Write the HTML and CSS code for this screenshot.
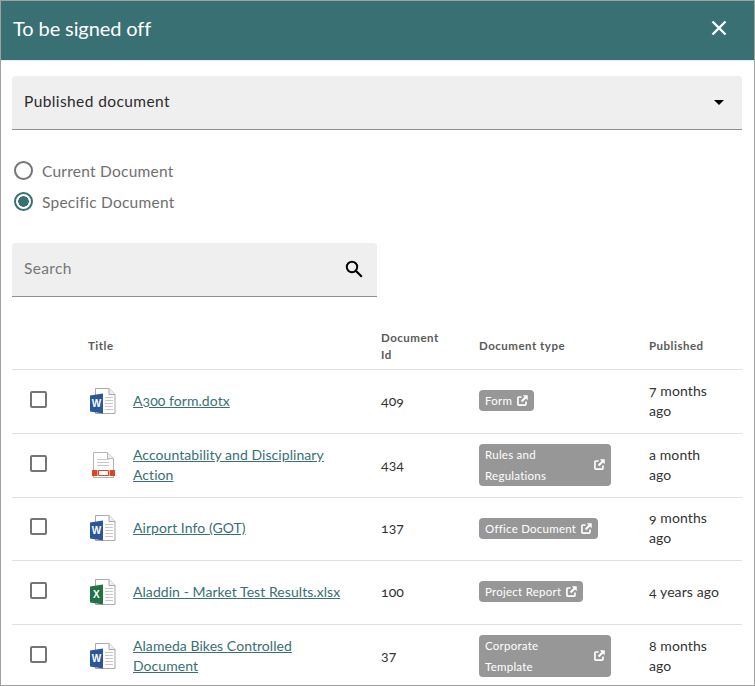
FILE: index.html
```html
<!DOCTYPE html>
<html lang="en">
<head>
  <meta charset="UTF-8">
  <title>To be signed off</title>
  <link rel="stylesheet" href="styles.css">
</head>
<body>
  <svg class="defs" width="0" height="0">
    <symbol id="ext" viewBox="0 0 12 12">
      <path d="M5 2.200H2a1 1 0 0 0-1 1V10a1 1 0 0 0 1 1h6.800a1 1 0 0 0 1-1V7" fill="none" stroke="currentColor" stroke-width="1.800"/>
      <path d="M6.300 .3H11.700V5.700L9.800 3.800 5.800 7.800 4.200 6.200 8.200 2.200z" fill="currentColor"/>
    </symbol>
    <symbol id="page" viewBox="0 0 26 26">
      <path d="M5.500 .5h13.500l6 6v19H5.500z" fill="#fff" stroke="#a8a8a8"/>
      <path d="M19 .5v6h6" fill="#eee" stroke="#a8a8a8"/>
      <path d="M15 9.500h8M15 12.500h8M15 15.500h8M15 18.500h8M15 21.500h8" stroke="#c8c8c8"/>
    </symbol>
  </svg>
  <div class="dialog">
    <header class="head">
      <h1>To be signed off</h1>
      <svg class="close" viewBox="0 0 16 16"><path d="M1.500 1.500l13 13M14.500 1.500l-13 13" stroke="#fff" stroke-width="2.400" fill="none"/></svg>
    </header>
    <div class="body">
      <div class="select">
        <span>Published document</span>
        <i class="caret"></i>
      </div>
      <div class="radios">
        <label class="radio"><i class="dot"></i>Current Document</label>
        <label class="radio on"><i class="dot"></i>Specific Document</label>
      </div>
      <div class="search">
        <span>Search</span>
        <svg width="18" height="18" viewBox="0 0 18 18"><circle cx="7" cy="7" r="5.200" fill="none" stroke="#000" stroke-width="2"/><path d="M10.800 10.800l6 6" stroke="#000" stroke-width="2.200"/></svg>
      </div>
      <table class="docs">
        <colgroup>
          <col class="c-check"><col class="c-icon"><col class="c-title"><col class="c-id"><col class="c-type"><col class="c-pub">
        </colgroup>
        <thead>
          <tr><th></th><th colspan="2">Title</th><th class="th-id">Document Id</th><th>Document type</th><th>Published</th></tr>
        </thead>
        <tbody>
          <tr>
            <td><i class="check"></i></td>
            <td><svg class="file" viewBox="0 0 26 26"><use href="#page"/><path d="M0 7.500L13 5.500v20L0 23.500z" fill="#2b579a"/><text x="6.500" y="19" class="letter">W</text></svg></td>
            <td><a href="#">A300 form.dotx</a></td>
            <td>409</td>
            <td><span class="tag">Form <svg class="ext"><use href="#ext"/></svg></span></td>
            <td>7 months ago</td>
          </tr>
          <tr>
            <td><i class="check"></i></td>
            <td><svg class="file" viewBox="0 0 26 26"><path d="M3.500 .5h14l6 6v19h-20z" fill="#fff" stroke="#b5b5b5"/><path d="M17.500 .5v6h6" fill="#eee" stroke="#b5b5b5"/><path d="M7 7.500h12M7 10.500h12M7 13.500h12" stroke="#c8c8c8"/><path d="M2 18h5.500v6H2zM19.500 18H25v6h-5.500z" fill="#d9472b"/><path d="M8.500 18.500h10v5h-10z" fill="#fff" stroke="#d9472b"/></svg></td>
            <td><a href="#">Accountability and Disciplinary Action</a></td>
            <td>434</td>
            <td><span class="tag wide"><span>Rules and Regulations</span> <svg class="ext"><use href="#ext"/></svg></span></td>
            <td>a month ago</td>
          </tr>
          <tr>
            <td><i class="check"></i></td>
            <td><svg class="file" viewBox="0 0 26 26"><use href="#page"/><path d="M0 7.500L13 5.500v20L0 23.500z" fill="#2b579a"/><text x="6.500" y="19" class="letter">W</text></svg></td>
            <td><a href="#">Airport Info (GOT)</a></td>
            <td>137</td>
            <td><span class="tag">Office Document <svg class="ext"><use href="#ext"/></svg></span></td>
            <td>9 months ago</td>
          </tr>
          <tr>
            <td><i class="check"></i></td>
            <td><svg class="file" viewBox="0 0 26 26"><use href="#page"/><path d="M0 7.500L13 5.500v20L0 23.500z" fill="#217346"/><text x="6.500" y="19" class="letter">X</text></svg></td>
            <td><a href="#">Aladdin - Market Test Results.xlsx</a></td>
            <td>100</td>
            <td><span class="tag">Project Report <svg class="ext"><use href="#ext"/></svg></span></td>
            <td>4 years ago</td>
          </tr>
          <tr>
            <td><i class="check"></i></td>
            <td><svg class="file" viewBox="0 0 26 26"><use href="#page"/><path d="M0 7.500L13 5.500v20L0 23.500z" fill="#2b579a"/><text x="6.500" y="19" class="letter">W</text></svg></td>
            <td><a href="#">Alameda Bikes Controlled Document</a></td>
            <td>37</td>
            <td><span class="tag wide"><span>Corporate Template</span> <svg class="ext"><use href="#ext"/></svg></span></td>
            <td>8 months ago</td>
          </tr>
        </tbody>
      </table>
    </div>
  </div>
</body>
</html>
```
FILE: styles.css
```css
/* Dialog */
html, body { height: 100%; }
body { margin: 0; overflow: hidden; background: #fff; font-family: Lato, "Open Sans", sans-serif; font-variant-numeric: oldstyle-nums; color: #333; }
.defs { position: absolute; }
.dialog { height: 686px; box-sizing: border-box; border: 1px solid #a0a0a0; overflow: hidden; background: #fff; }
.head { height: 59px; box-sizing: content-box; background: #397073; display: flex; align-items: center; justify-content: space-between; padding: 0 27px 0 12px; border-bottom: 1px solid #e8eeee; }
.head h1 { margin: 0 0 5px; font-size: 20px; font-weight: 400; color: #fff; letter-spacing: -0.1px; }
.close { width: 16px; height: 16px; margin-bottom: 6px; }
.body { padding: 15px 12px 0 11px; }

/* Fields */
.select { height: 53px; box-sizing: content-box; background: #efefef; border-bottom: 1px solid #8f8f8f; border-radius: 4px 4px 0 0; display: flex; align-items: center; justify-content: space-between; padding: 0 18px 0 12px; font-size: 15.500px; letter-spacing: 0.4px; color: #2b2b2b; }
.select span { margin-bottom: 3px; }
.caret { width: 0; height: 0; border: 5px solid transparent; border-top-color: #000; border-bottom: 0; }
.radios { display: flex; flex-direction: column; gap: 8px; margin: 29px 0 0 2px; }
.radio { display: flex; align-items: center; gap: 9px; height: 23px; font-size: 15.500px; letter-spacing: 0.25px; color: #6f6f6f; }
.dot { width: 19px; height: 19px; box-sizing: border-box; border: 2px solid #757575; border-radius: 50%; display: block; }
.on .dot { border-color: #397073; background: radial-gradient(circle, #397073 0 5px, #fff 5.500px); }
.search { width: 339px; height: 53px; margin-top: 30px; background: #efefef; border-bottom: 1px solid #8f8f8f; border-radius: 4px 4px 0 0; display: flex; align-items: center; justify-content: space-between; padding: 0 14px 0 12px; font-size: 15.500px; letter-spacing: 0.35px; color: #777; }
.search span { margin-bottom: 3px; }
.search svg { margin-bottom: 1px; }

/* Table */
.docs { width: 730px; margin-top: 27px; border-collapse: collapse; table-layout: fixed; font-size: 14px; letter-spacing: 0.1px; }
.docs th { height: 43px; padding: 0 0 2px; text-align: left; font-size: 11.500px; font-weight: 700; line-height: 17px; color: #5a5a5a; letter-spacing: 0.5px; vertical-align: middle; }
.docs .th-id { padding-right: 30px; }
.docs thead tr, .docs tbody tr { border-bottom: 1px solid #e0e0e0; }
.docs tbody tr:last-child { border-bottom: 0; }
.docs td { padding: 9px 0 11px; line-height: 20px; vertical-align: middle; }
.docs tbody tr { height: 64px; }
.docs tbody tr:nth-child(3) { height: 63px; }
.c-check { width: 76px; }
.c-icon { width: 45px; }
.c-title { width: 248px; }
.c-id { width: 98px; }
.c-type { width: 170px; }
.c-pub { width: 93px; }
.check { display: block; width: 17px; height: 17px; margin: -3px 0 0 18px; box-sizing: border-box; border: 2px solid #757575; border-radius: 2px; }
.file { display: block; width: 26px; height: 26px; margin-left: 2px; }
.letter { font-size: 10px; font-weight: 700; fill: #fff; text-anchor: middle; font-family: "Liberation Sans", sans-serif; }
.docs a { color: #397073; text-decoration: underline; letter-spacing: 0.06px; }
.docs td:nth-child(3) { padding-right: 22px; }
.docs td:last-child { padding-right: 18px; }
.tag { display: inline-flex; align-items: center; gap: 5px; background: #979797; color: #fff; border-radius: 4px; padding: 0 6px; font-size: 11.500px; line-height: 21px; letter-spacing: 0.25px; vertical-align: middle; }
.tag.wide { width: 120px; justify-content: space-between; }
.tag.wide span { width: 92px; }
.ext { width: 11px; height: 11px; flex: none; }
```
